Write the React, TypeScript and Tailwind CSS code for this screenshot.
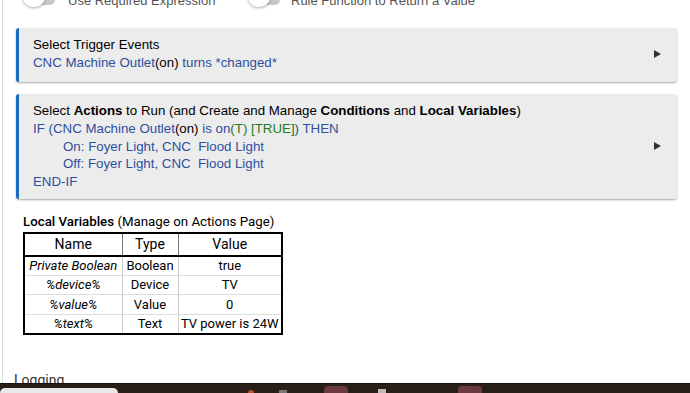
import React from 'react'

const blue = 'text-[#2d4f9e]'
const green = 'text-[#1f7a1f]'

function Toggle() {
  return (
    <div className="relative w-[32px] h-[20px] shrink-0">
      <div className="absolute left-[12px] top-[4px] w-[20px] h-[10px] rounded-full bg-[#c9c9c9]" />
      <div className="absolute left-0 top-[-4px] w-[22px] h-[20px] rounded-full bg-white shadow-[0_1px_3px_rgba(0,0,0,0.35)]" />
    </div>
  )
}

function Arrow() {
  return (
    <svg width="7" height="8" viewBox="0 0 7 8" className="shrink-0">
      <path d="M0 0 L7 4 L0 8 Z" fill="#333" />
    </svg>
  )
}

function Card({ children, className = '' }: { children: React.ReactNode; className?: string }) {
  return (
    <div
      className={`flex items-center rounded-[3px] border-l-[3px] border-[#1d6bbf] bg-[#ececec] pl-[14px] pr-[16px] shadow-[0_1px_2px_rgba(0,0,0,0.35)] font-['Liberation_Sans',Arial,sans-serif] text-[13.3px] text-black ${className}`}
    >
      <div className="flex-1">{children}</div>
      <Arrow />
    </div>
  )
}

const rows = [
  { name: 'Private Boolean', type: 'Boolean', value: 'true' },
  { name: '%device%', type: 'Device', value: 'TV' },
  { name: '%value%', type: 'Value', value: '0' },
  { name: '%text%', type: 'Text', value: 'TV power is 24W' },
]

export default function App() {
  return (
    <div className="relative w-[690px] h-[393px] overflow-hidden bg-white">
      <div className="h-[383px] ml-[2px] border-l border-[#dcdcdc] flex flex-col">
        {/* toggles, scrolled mostly out of view */}
        <div className="flex items-center h-[12px] text-[#555] font-['Liberation_Sans',Arial,sans-serif] text-[13px]">
          <div className="flex items-center gap-[13px] ml-[20px] -mt-[10px] w-[225px]">
            <Toggle />
            <span>Use Required Expression</span>
          </div>
          <div className="flex items-center gap-[11px] -mt-[10px]">
            <Toggle />
            <span>Rule Function to Return a Value</span>
          </div>
        </div>

        <div className="ml-[13px] mr-[13px] mt-[16px] flex flex-col gap-[12px]">
          <Card className="pt-[8px] pb-[10px] leading-[18px]">
            <div>Select Trigger Events</div>
            <div className={blue}>
              CNC Machine Outlet<span className="text-black">(on)</span> turns *changed*
            </div>
          </Card>

          <Card className="pt-[8px] pb-[8px] leading-[17.8px]">
            <div>
              Select <b>Actions</b> to Run (and Create and Manage <b>Conditions</b> and <b>Local Variables</b>)
            </div>
            <div className={blue}>
              IF (CNC Machine Outlet<span className="text-black">(on)</span> is on<span className={green}>(T) [TRUE]</span>) THEN
            </div>
            <div className={`${blue} pl-[30px]`}>On: Foyer Light, CNC&nbsp; Flood Light</div>
            <div className={`${blue} pl-[30px]`}>Off: Foyer Light, CNC&nbsp; Flood Light</div>
            <div className={blue}>END-IF</div>
          </Card>
        </div>

        <div className="ml-[20px] mt-[15px] font-['Roboto',sans-serif] text-black">
          <div className="text-[13.3px] leading-[16px]">
            <span className="font-medium">Local Variables</span> (Manage on Actions Page)
          </div>
          <table className="mt-[2px] border-collapse border-2 border-black text-[13px] w-[260px]">
            <thead>
              <tr className="border-b-2 border-black text-[14px]">
                <th className="h-[22px] font-normal w-[98px] border-r border-[#777]">Name</th>
                <th className="h-[22px] font-normal w-[56px] border-r border-[#777]">Type</th>
                <th className="h-[22px] font-normal">Value</th>
              </tr>
            </thead>
            <tbody>
              {rows.map((r) => (
                <tr key={r.name} className="border-b border-[#ddd] leading-[18px]">
                  <td className="h-[19.5px] italic text-center border-r border-[#ccc] px-[2px]">{r.name}</td>
                  <td className="h-[19.5px] text-center border-r border-[#ccc]">{r.type}</td>
                  <td className="h-[19.5px] text-center">{r.value}</td>
                </tr>
              ))}
            </tbody>
          </table>
        </div>

        <div className="flex-1" />
        <div className="ml-[11px] h-[8px] overflow-visible text-[14px] leading-[16px] text-[#333] font-['Roboto',sans-serif]">
          <div className="-mt-[3px]">Logging</div>
        </div>
      </div>

      {/* taskbar edge */}
      <div className="relative z-10 h-[10px] bg-[#2a1e19] border-t border-[#111] flex items-end">
        <div className="w-[118px] h-[5px] bg-[#e8e8e8] rounded-t-[6px]" />
        <div className="ml-[130px] w-[6px] h-[3px] rounded-t-full bg-[#c0502a]" />
        <div className="ml-[25px] w-[8px] h-[3px] bg-[#777]" />
        <div className="ml-[37px] w-[24px] h-[7px] rounded-t-[4px] bg-[#6b3a40]" />
        <div className="ml-[30px] w-[8px] h-[4px] bg-[#bbb]" />
        <div className="ml-[72px] w-[24px] h-[7px] rounded-t-[4px] bg-[#6b3a40]" />
      </div>
    </div>
  )
}
